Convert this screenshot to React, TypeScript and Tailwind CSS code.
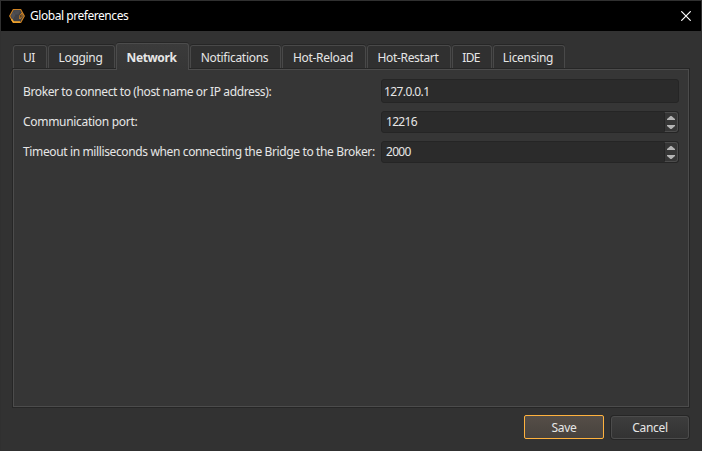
import React from 'react';

type TabProps = { label: string; width: string; spacing: string; active?: boolean };

const tabs: TabProps[] = [
  { label: 'UI', width: 'w-[34px]', spacing: 'tracking-[-0.5px]' },
  { label: 'Logging', width: 'w-[67px]', spacing: 'tracking-[-0.3px]' },
  { label: 'Network', width: 'w-[73px]', spacing: 'tracking-[-0.4px]', active: true },
  { label: 'Notifications', width: 'w-[91px]', spacing: 'tracking-[-0.3px]' },
  { label: 'Hot-Reload', width: 'w-[84px]', spacing: 'tracking-[-0.3px]' },
  { label: 'Hot-Restart', width: 'w-[84px]', spacing: 'tracking-[-0.35px]' },
  { label: 'IDE', width: 'w-[40px]', spacing: 'tracking-[-0.7px]' },
  { label: 'Licensing', width: 'w-[72px]', spacing: 'tracking-[-0.3px]' },
];

function Tab({ label, width, spacing, active }: TabProps) {
  return (
    <div
      className={`${width} ${spacing} shrink-0 flex justify-center whitespace-nowrap rounded-t-[3px] border border-b-0 pr-[2px] ${
        active
          ? 'z-10 h-[27px] border-[#4c4c4c] bg-linear-to-b from-[#3b3b3b] to-[#363636] pt-[5px] font-bold shadow-[0_-1px_0_#262626]'
          : 'h-[23px] border-[#494949] bg-[#303030] pt-[3px] shadow-[0_-1px_0_#262626] mt-[2px]'
      }`}
    >
      {label}
    </div>
  );
}

function Spinner({ value }: { value: string }) {
  return (
    <div className="flex h-[22px] w-[298px] rounded-[3px] border border-[#252525] bg-[#2b2b2b]">
      <span className="grow pl-1 pt-px tracking-[-0.7px]">{value}</span>
      <span className="flex w-[14px] flex-col items-center justify-center gap-[5px] rounded-r-[3px] border border-[#4c4c4c] border-l-[#252525] bg-[#363636]">
        <svg width="8" height="4" viewBox="0 0 8 4"><path d="M0 4V3L3.5 0H4.5L8 3V4Z" fill="#b4b4b4" /></svg>
        <svg width="8" height="4" viewBox="0 0 8 4"><path d="M0 0V1L3.5 4H4.5L8 1V0Z" fill="#b4b4b4" /></svg>
      </span>
    </div>
  );
}

function AppIcon() {
  return (
    <svg width="16" height="16" viewBox="0 0 16 16" fill="none">
      <path d="M4.3 1.5H11.7L15.3 8L11.7 14.5H4.3L.7 8Z" fill="#404042" stroke="#cf8222" strokeWidth="1.2" />
      <path d="M4.5 2.2H11.3L9.5 6.5H6Z" fill="#4c4c50" />
      <path d="M1.8 8L4.2 3.2L6.5 7L4 12Z" fill="#505054" />
      <path d="M4 11.5L6.5 7.5H10V12.5H4.5Z" fill="#414145" />
      <path d="M2.5 11.2L4.5 14H11" stroke="#f5a82e" strokeWidth="1.5" />
      <path d="M10.8 11V7.5L13 5V8.5Z" fill="#29292b" stroke="#cf8222" />
    </svg>
  );
}

export default function App() {
  return (
    <div className="flex h-[451px] w-[702px] flex-col overflow-hidden border border-[#303030] bg-[#323232] font-['Noto_Sans','Open_Sans',sans-serif] text-[12px] leading-[18px] text-[#e6e6e6]">
      <header className="flex h-[30px] shrink-0 items-center bg-black pl-2 pr-[10px] text-white">
        <AppIcon />
        <span className="ml-[5px] whitespace-nowrap tracking-[-0.45px]">Global preferences</span>
        <svg className="ml-auto" width="10" height="10" viewBox="0 0 10 10"><path d="M.3 .3L9.7 9.7M9.7 .3L.3 9.7" stroke="#fff" strokeWidth="1.2" /></svg>
      </header>
      <main className="flex flex-col pl-[11px] pr-[11px] pt-3">
        <nav className="z-10 flex h-[25px] items-start gap-px pl-px">
          {tabs.map((tab) => <Tab key={tab.label} {...tab} />)}
        </nav>
        <section className="h-[340px] w-[678px] border border-[#262626]">
          <div className="flex h-full flex-col gap-2 border border-[#4c4c4c] bg-[#363636] pl-[9px] pr-[9px] pt-[9px]">
            <div className="flex h-6 items-center justify-between">
              <span className="whitespace-nowrap pt-[2px] tracking-[-0.38px]">Broker to connect to (host name or IP address):</span>
              <div className="h-6 w-[298px] rounded-[3px] border border-[#252525] bg-[#2b2b2b] pl-[2px] pt-[3px] tracking-[-0.6px]">127.0.0.1</div>
            </div>
            <div className="flex h-[22px] items-center justify-between">
              <span className="whitespace-nowrap tracking-[-0.3px]">Communication port:</span>
              <Spinner value="12216" />
            </div>
            <div className="flex h-[22px] items-center justify-between">
              <span className="whitespace-nowrap tracking-[-0.37px]">Timeout in milliseconds when connecting the Bridge to the Broker:</span>
              <Spinner value="2000" />
            </div>
          </div>
        </section>
        <footer className="mr-px mt-[7px] flex justify-end gap-[7px]">
          <button className="h-6 w-20 rounded-[2px] border border-[#ffb23e] bg-linear-to-b from-[#554e47] to-[#48433e] pt-px tracking-[-0.3px]">Save</button>
          <button className="mt-px h-[23px] w-[78px] rounded-[3px] border border-[#4c4c4c] bg-linear-to-b from-[#3d3d3d] to-[#333333] tracking-[-0.3px] shadow-[0_0_0_1px_#262626]">Cancel</button>
        </footer>
      </main>
    </div>
  );
}
